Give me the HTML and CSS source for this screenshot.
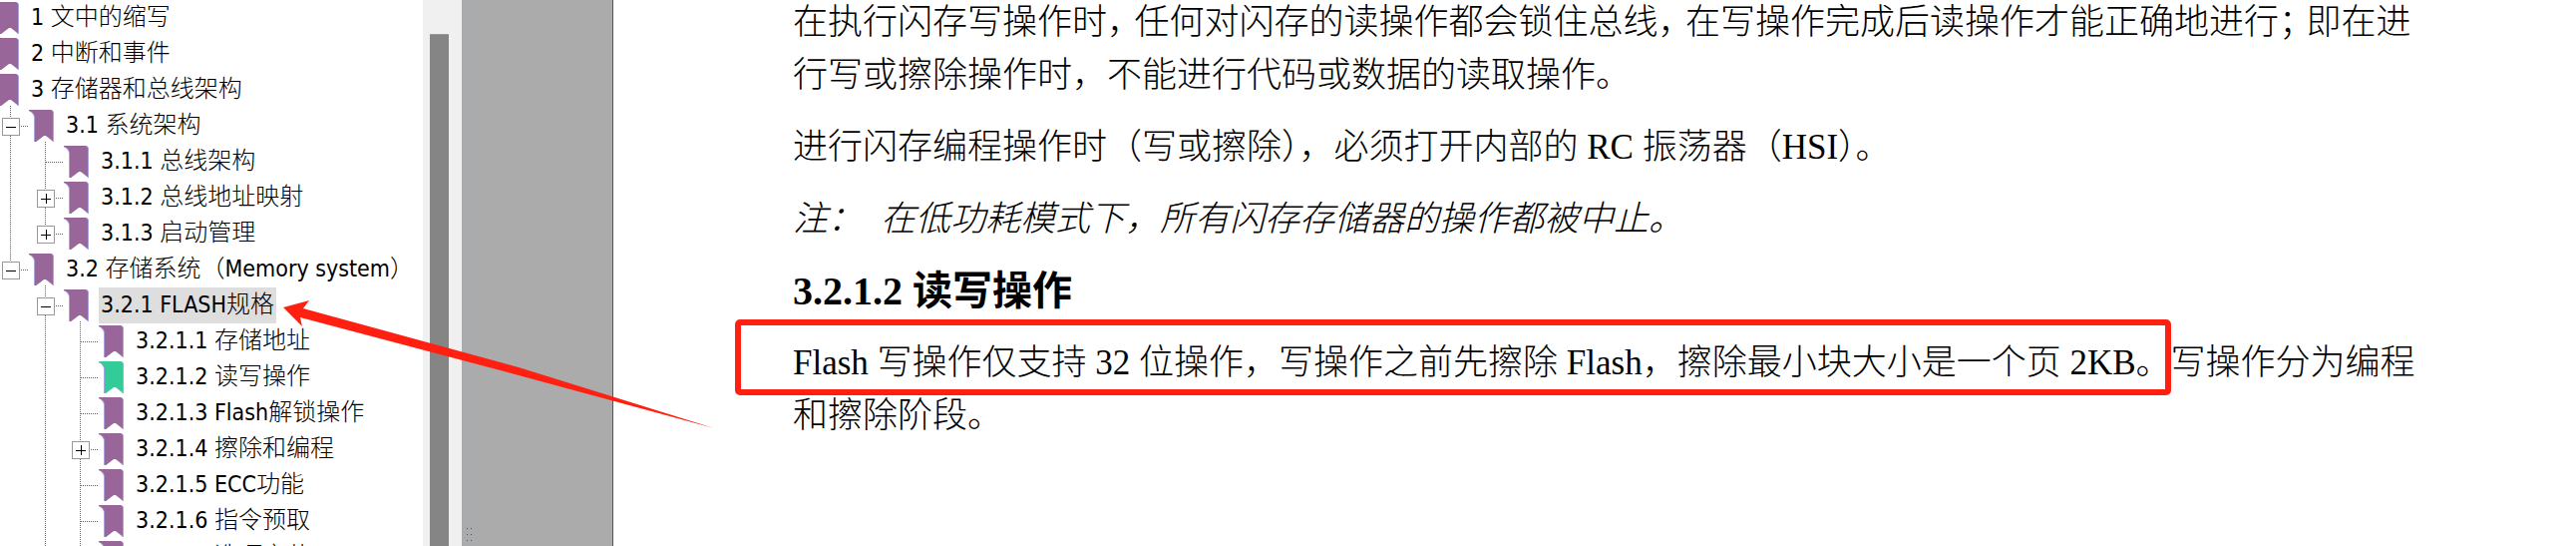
FILE: index.html
```html
<!DOCTYPE html>
<html lang="zh-CN">
<head>
<meta charset="utf-8">
<title>存储系统</title>
<link rel="stylesheet" href="styles.css">
</head>
<body>
<svg class="defs" aria-hidden="true">
  <symbol id="bookmark" viewBox="0 0 25 32">
    <path class="edge" d="M0 0H23L25 2V32H24L16 25L7 32H5V8Q5 4 0 1Z"/>
    <path d="M0 0H22L24 2V31L17 26H15L7 32H6V7Q5 2 0 1Z" fill="currentColor"/>
  </symbol>
</svg>
<div class="viewer">
  <nav class="outline" aria-label="书签">
    <ul class="tree root">
      <li><div class="row"><span class="branch"></span><svg class="mark"><use href="#bookmark"/></svg><a href="#s1" class="label"><span class="latin">1 </span>文中的缩写</a></div></li>
      <li><div class="row"><span class="branch"></span><svg class="mark"><use href="#bookmark"/></svg><a href="#s2" class="label"><span class="latin">2 </span>中断和事件</a></div></li>
      <li><div class="row"><span class="branch"></span><svg class="mark"><use href="#bookmark"/></svg><a href="#s3" class="label"><span class="latin">3 </span>存储器和总线架构</a></div>
        <ul class="tree">
          <li><div class="row"><span class="branch"><button class="toggle open" aria-label="折叠 3.1"></button></span><svg class="mark"><use href="#bookmark"/></svg><a href="#s31" class="label"><span class="latin">3.1 </span>系统架构</a></div>
            <ul class="tree">
              <li><div class="row"><span class="branch"></span><svg class="mark"><use href="#bookmark"/></svg><a href="#s311" class="label"><span class="latin">3.1.1 </span>总线架构</a></div></li>
              <li><div class="row"><span class="branch"><button class="toggle" aria-label="展开 3.1.2"></button></span><svg class="mark"><use href="#bookmark"/></svg><a href="#s312" class="label"><span class="latin">3.1.2 </span>总线地址映射</a></div></li>
              <li class="last"><div class="row"><span class="branch"><button class="toggle" aria-label="展开 3.1.3"></button></span><svg class="mark"><use href="#bookmark"/></svg><a href="#s313" class="label"><span class="latin">3.1.3 </span>启动管理</a></div></li>
            </ul>
          </li>
          <li class="last"><div class="row"><span class="branch"><button class="toggle open" aria-label="折叠 3.2"></button></span><svg class="mark"><use href="#bookmark"/></svg><a href="#s32" class="label"><span class="latin">3.2 </span>存储系统（<span class="latin">Memory system</span>）</a></div>
            <ul class="tree">
              <li><div class="row"><span class="branch"><button class="toggle open" aria-label="折叠 3.2.1"></button></span><svg class="mark"><use href="#bookmark"/></svg><a href="#s321" class="label selected"><span class="latin">3.2.1 FLASH</span>规格</a></div>
                <ul class="tree">
                  <li><div class="row"><span class="branch"></span><svg class="mark"><use href="#bookmark"/></svg><a href="#s3211" class="label"><span class="latin">3.2.1.1 </span>存储地址</a></div></li>
                  <li><div class="row"><span class="branch"></span><svg class="mark current"><use href="#bookmark"/></svg><a href="#s3212" class="label"><span class="latin">3.2.1.2 </span>读写操作</a></div></li>
                  <li><div class="row"><span class="branch"></span><svg class="mark"><use href="#bookmark"/></svg><a href="#s3213" class="label"><span class="latin">3.2.1.3 Flash</span>解锁操作</a></div></li>
                  <li><div class="row"><span class="branch"><button class="toggle" aria-label="展开 3.2.1.4"></button></span><svg class="mark"><use href="#bookmark"/></svg><a href="#s3214" class="label"><span class="latin">3.2.1.4 </span>擦除和编程</a></div></li>
                  <li><div class="row"><span class="branch"></span><svg class="mark"><use href="#bookmark"/></svg><a href="#s3215" class="label"><span class="latin">3.2.1.5 ECC</span>功能</a></div></li>
                  <li><div class="row"><span class="branch"></span><svg class="mark"><use href="#bookmark"/></svg><a href="#s3216" class="label"><span class="latin">3.2.1.6 </span>指令预取</a></div></li>
                  <li><div class="row"><span class="branch"></span><svg class="mark"><use href="#bookmark"/></svg><a href="#s3217" class="label"><span class="latin">3.2.1.7 </span>选项字节</a></div></li>
                </ul>
              </li>
            </ul>
          </li>
        </ul>
      </li>
    </ul>
  </nav>
  <div class="scrollbar"><div class="thumb"></div></div>
  <div class="splitter"><div class="grip"></div></div>
  <div class="backdrop"></div>
  <main class="page">
    <p>在执行闪存写操作时<span class="tight">，</span>任何对闪存的读操作都会锁住总线<span class="tight">，</span>在写操作完成后读操作才能正确地进行<span class="tight">；</span>即在进行写或擦除操作时，不能进行代码或数据的读取操作。</p>
    <p>进行闪存编程操作时（写或擦除），必须打开内部的 RC 振荡器（HSI）。</p>
    <p class="note"><span class="note-tag">注：</span>在低功耗模式下，所有闪存存储器的操作都被中止。</p>
    <h4 id="s3212">3.2.1.2 读写操作</h4>
    <div class="marked">
      <p>Flash 写操作仅支持 32 位操作，写操作之前先擦除 Flash，擦除最小块大小是一个页 2KB。写操作分为编程和擦除阶段。</p>
      <div class="frame"></div>
    </div>
  </main>
  <svg class="arrow" width="433" height="130" viewBox="284 300 433 130" aria-hidden="true">
    <path d="M284 308L310 301L304 309L520 368L716 429L520 376L301 318L303 327Z"/>
  </svg>
</div>
</body>
</html>
```
FILE: styles.css
```css
* {
  box-sizing: border-box;
}

body {
  margin: 0;
  background: #fff;
  color: #000;
}

.defs {
  position: absolute;
  width: 0;
  height: 0;
}

.viewer {
  position: relative;
  display: flex;
  height: 100vh;
  overflow: hidden;
}

/* Outline tree */
.outline {
  flex: 0 0 424px;
  overflow: hidden;
  font-family: "DejaVu Sans Condensed", "Noto Sans CJK SC", sans-serif;
  font-size: 24px;
  font-weight: 300;
}

.latin {
  font-size: 23px;
}

.tree {
  margin: 0 0 0 35px;
  padding: 0;
  list-style: none;
}

.root {
  margin-left: -35px;
}

.tree li {
  position: relative;
}

.tree li::before {
  content: "";
  position: absolute;
  left: 10px;
  top: -2px;
  bottom: 0;
  width: 1px;
  background: repeating-linear-gradient(#666 0 1px, #fff 1px 2px);
}

.tree li.last::before {
  bottom: auto;
  height: 20px;
}

.row {
  position: relative;
  display: flex;
  height: 36px;
}

.branch {
  flex: 0 0 29px;
  padding: 10px 0 0 2px;
  background: repeating-linear-gradient(90deg, #666 0 1px, #fff 1px 2px) 11px 18px / 18px 1px no-repeat;
}

.toggle {
  display: block;
  width: 18px;
  height: 18px;
  padding: 0;
  border: 1px solid #999;
  background:
    linear-gradient(#000, #000) 50% 50% / 10px 1px no-repeat,
    linear-gradient(#000, #000) 50% 50% / 1px 10px no-repeat,
    #fff;
}

.toggle.open {
  background: linear-gradient(#000, #000) 50% 50% / 10px 1px no-repeat, #fff;
}

.mark {
  flex: none;
  width: 25px;
  height: 32px;
  margin: 2px 10px 0 0;
  color: #969;
}

.mark.current {
  color: #3c9;
}

.edge {
  fill: #a9a4e0;
}

.label {
  padding: 0 2px;
  line-height: 34px;
  white-space: nowrap;
  color: #000;
  text-decoration: none;
}

.selected {
  background: #dedede;
}

/* Scrollbar and pane divider */
.scrollbar {
  flex: 0 0 39px;
  padding: 34px 13px 0 7px;
  background: #f0f0f0;
}

.thumb {
  height: 100%;
  background: #858585;
  border-top: 1px solid #999;
}

.splitter {
  display: flex;
  flex: 0 0 13px;
  align-items: flex-end;
  padding-left: 5px;
  background: #a9abad;
}

.grip {
  width: 8px;
  height: 18px;
  background: conic-gradient(from 270deg at 1px 1px, #555 90deg, transparent 0) 0 0 / 4px 6px;
}

.backdrop {
  flex: 0 0 139px;
  background: #ababab;
  border-right: 1px solid #555;
}

/* Document page */
.page {
  display: flex;
  flex: 1;
  flex-direction: column;
  gap: 19px;
  margin-top: -4px;
  padding: 0 156px 0 180px;
  font-family: "Liberation Serif", "Noto Sans CJK SC", serif;
  font-size: 35px;
  font-weight: 300;
  line-height: 53px;
}

.page p,
.page h4 {
  margin: 0;
}

.page h4 {
  font-size: 40px;
  font-weight: 700;
}

/* Half-width punctuation with a shortened trailing gap */
.tight {
  margin-right: 10px;
  font-feature-settings: "halt";
}

.note {
  font-style: italic;
}

.note-tag {
  margin-right: 18px;
}

.marked {
  position: relative;
}

.frame {
  position: absolute;
  top: -17px;
  left: -58px;
  right: 250px;
  height: 76px;
  border: 6px solid #ff2011;
  border-radius: 5px;
}

.arrow {
  position: absolute;
  left: 284px;
  top: 300px;
  fill: #ff2011;
}
```
